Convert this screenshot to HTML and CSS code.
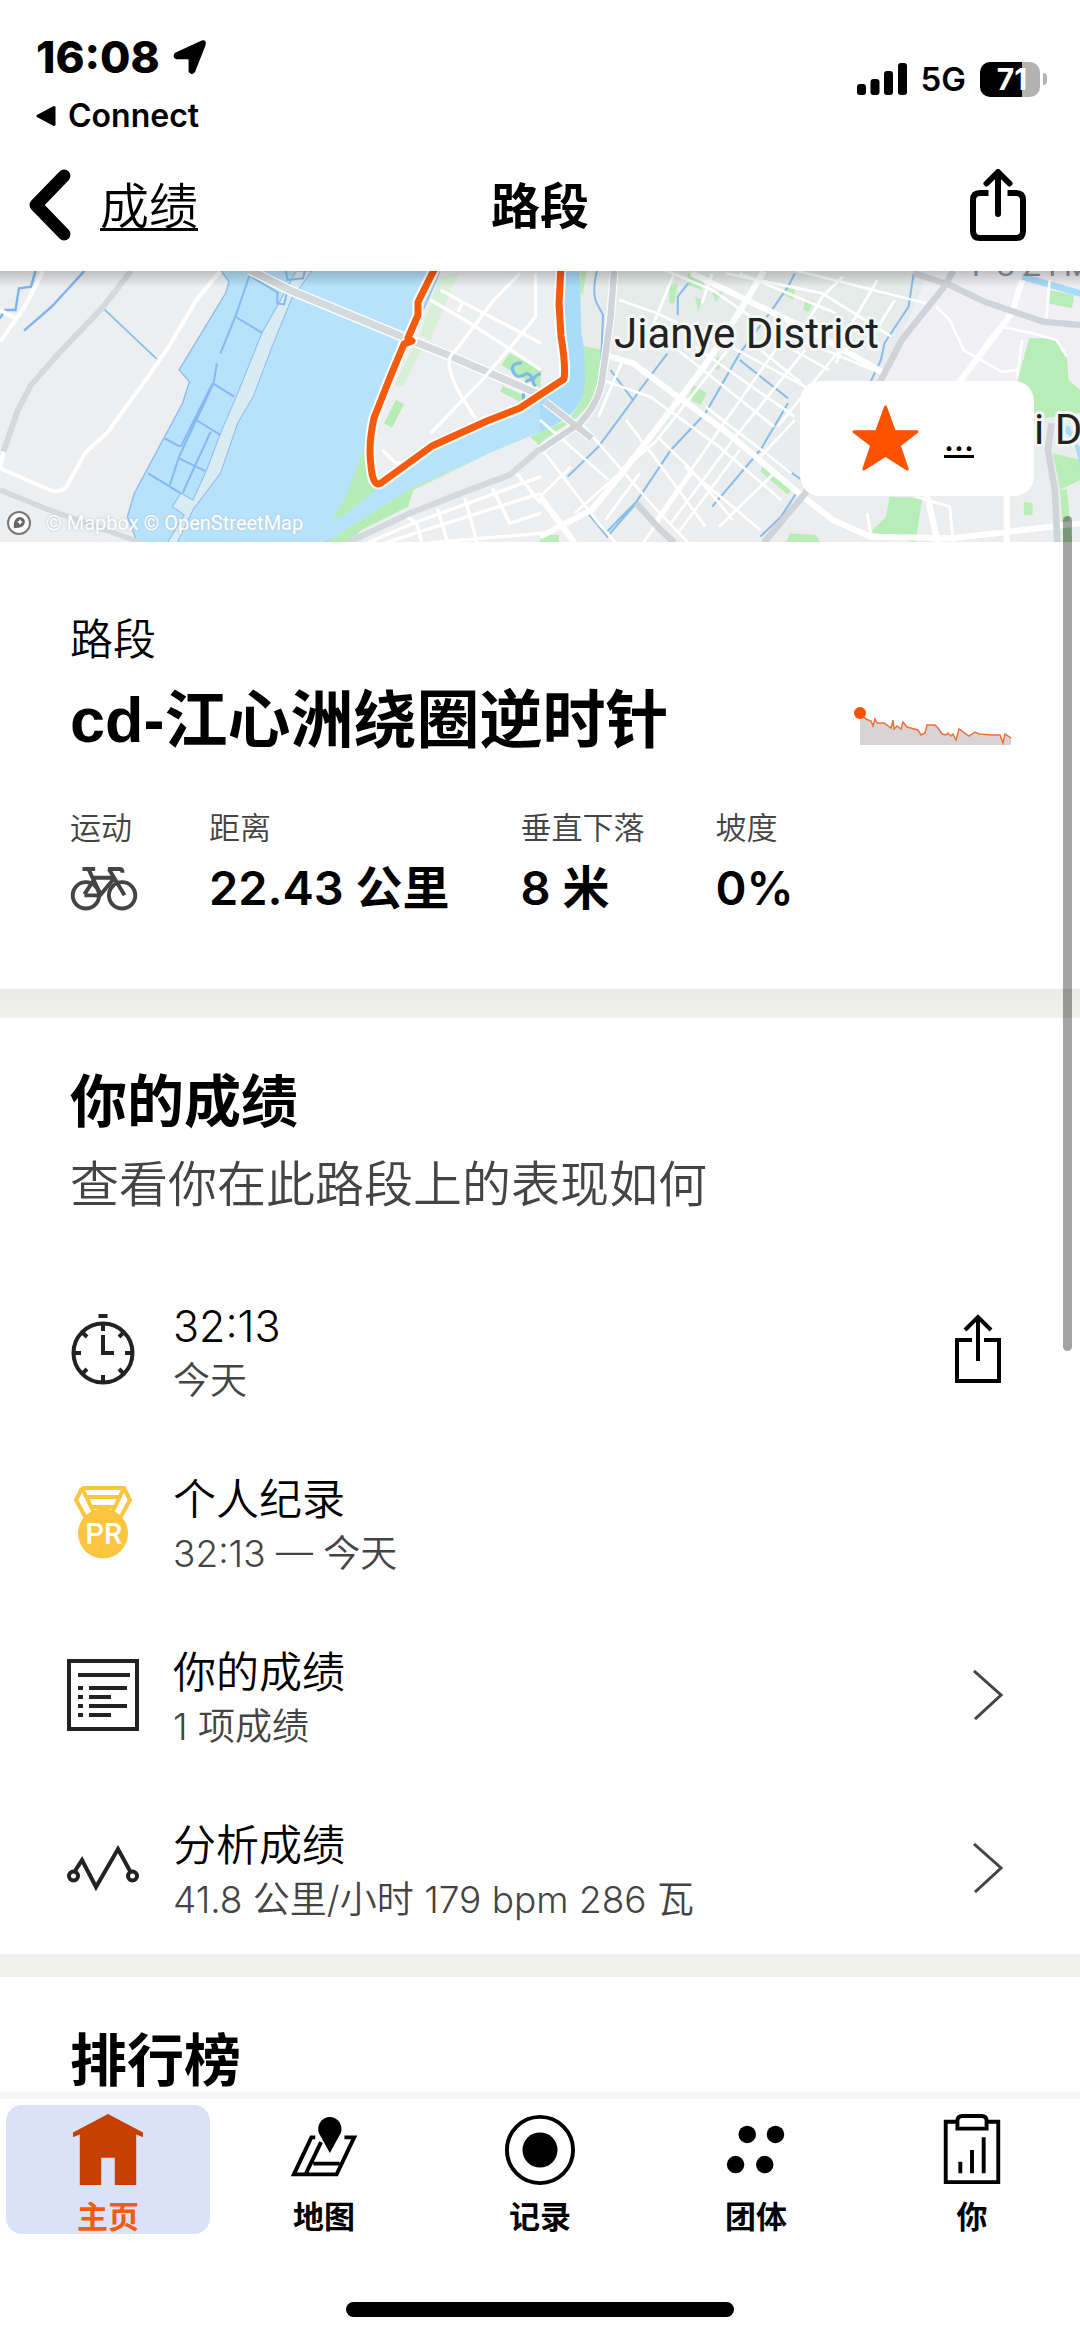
FILE: index.html
```html
<!DOCTYPE html>
<html lang="zh-CN">
<head>
<meta charset="utf-8">
<meta name="viewport" content="width=device-width, initial-scale=1">
<title>路段</title>
<link rel="stylesheet" href="styles.css">
</head>
<body>
<div class="app">
  <header class="top">
    <div class="status">
      <div class="status-left">
        <div class="clock">
          <span>16:08</span>
          <svg width="36" height="36" viewBox="0 0 36 38" aria-hidden="true"><path d="M3 16 31 3Q34 2 33 6L22 34Q20 37 18 34V22Q18 20 16 20H4Q1 19 3 16Z" stroke="#000" stroke-width="3" stroke-linejoin="round"/></svg>
        </div>
        <a class="return-app" href="#">
          <svg width="22" height="22" viewBox="0 0 22 22" aria-hidden="true"><path d="M2 11 18 2.500V19.500Z" stroke="#000" stroke-width="3" stroke-linejoin="round"/></svg>
          <span>Connect</span>
        </a>
      </div>
      <div class="status-right">
        <svg width="50" height="32" viewBox="0 0 50 32" aria-hidden="true"><rect y="21" width="9" height="11" rx="3"/><rect x="13.500" y="16" width="9" height="16" rx="3"/><rect x="27" y="8" width="9" height="24" rx="3"/><rect x="41" width="9" height="32" rx="3"/></svg>
        <span class="network">5G</span>
        <span class="battery"><span class="battery-body">71</span><span class="battery-tip"></span></span>
      </div>
    </div>
    <nav class="navbar">
      <a class="back" href="#">
        <svg width="44" height="72" viewBox="0 0 44 74" aria-hidden="true"><path d="M36.500 7 7.500 37 36.500 67" fill="none" stroke="#000" stroke-width="13" stroke-linecap="round" stroke-linejoin="round"/></svg>
        <span>成绩</span>
      </a>
      <h1 class="nav-title">路段</h1>
      <button class="icon-button nav-share" type="button" aria-label="分享">
        <svg width="56" height="72" viewBox="0 0 56 72" aria-hidden="true"><g fill="none" stroke="#000" stroke-width="6"><path d="M18.500 24H10Q3 24 3 31V62Q3 69 10 69H46Q53 69 53 62V31Q53 24 46 24H37.500"/><path d="M28 45V4M16.500 14.500 28 3 39.500 14.500" stroke-linecap="round" stroke-linejoin="round"/></g></svg>
      </button>
    </nav>
  </header>

  <main class="content">
    <section class="map" aria-label="地图">
      <svg class="map-art" viewBox="0 0 1080 271" preserveAspectRatio="xMidYMid slice" aria-hidden="true">
        <defs>
          <linearGradient id="fade" x1="0" y1="0" x2="0" y2="1"><stop offset="0" stop-color="#000" stop-opacity=".2"/><stop offset="1" stop-color="#000" stop-opacity="0"/></linearGradient>
          <linearGradient id="district" x1="0" y1="0" x2="0" y2="1"><stop offset="0" stop-color="#e5ebea"/><stop offset="1" stop-color="#ecedef"/></linearGradient>
        </defs>
        <rect width="1080" height="271" fill="#eceef0"/>
        <rect x="570" width="510" height="271" fill="url(#district)"/>
        <path d="M930 0H1080V150L1010 120 880 110Z" fill="#efeff4"/>
        <!-- west bank and river -->
        <g transform="translate(0 -11) scale(.3444 .3333)" fill="none">
          <path d="M640 30 665 65 655 100 520 330 550 365 530 430 390 700 370 770 400 850H940L1100 760 1190 690 1570 520V400L1400 480 1260 560 1090 680 1060 560 1085 480 1190 240 1280 30Z" fill="#b7e2fc" stroke="#8dbcf0" stroke-width="4"/>
          <path d="M1075 560 1055 570 1000 720 962 780 1000 765 1090 690 1300 550 1080 640Z" fill="#b6ecb5"/>
          <path d="M1085 500 1215 240 1280 30H1570V400L1400 480 1260 560 1095 670Z" fill="#eceef0"/>
          <path d="M945 848 1185 690 1430 575 1570 515V850H945Z" fill="#eceef0"/>
          <path d="M1275 50 1330 40 1285 150 1250 240 1220 225ZM1200 262 1222 270 1170 380 1145 375Z" fill="#d8f0d8"/>
          <path d="M1150 420 1173 433 1138 503 1115 490ZM1480 280 1570 330V385L1455 315ZM1460 378 1530 410 1510 425 1452 395ZM945 848 1185 690 1430 575 1200 690 1185 740 1050 810 1010 848ZM1540 530 1570 515V560Z" fill="#b6ecb5"/>
          <path d="M1515 308Q1480 310 1490 335T1530 340Q1560 355 1525 365M1570 340Q1535 355 1555 380M1520 400V420" stroke="#7db9ec" stroke-width="9"/>
          <path d="M905 33 845 120 790 260 735 410 690 490 640 640 560 750 515 848 485 850 535 765 500 740 525 700 560 720 600 630 640 520 690 400 760 220 820 110 860 33Z" fill="#d9ebf3" stroke="#8dbcf0" stroke-width="3"/>
          <path d="M725 45 685 165 640 280M630 310 620 370 570 480 520 590 493 675M680 168 760 218M618 370 680 410M570 480 640 525M478 535 523 560M520 595 595 633M430 640 525 700M612 515 565 620 530 700M617 370 525 560M730 50 810 100M805 100V130L825 133 835 90M830 33 835 60 880 55 885 33" stroke="#87b9f1" stroke-width="6"/>
          <path d="M103 33 90 80 55 85 45 150 15 150 0 175M245 33 150 140 70 212" stroke="#7db4f0" stroke-width="7"/>
          <path d="M300 145 455 297" stroke="#83bfdf" stroke-width="5"/>
          <path d="M125 33 80 125 45 180 0 245M0 150 45 175" stroke="#fff" stroke-width="12"/>
          <path d="M640 33 570 120 490 260 430 350 310 520 250 575 190 685Q165 700 145 690L0 625 10 575" stroke="#fff" stroke-width="12"/>
          <path d="M380 33 300 140 180 270 90 375 50 455 10 575" stroke="#d4d9dc" stroke-width="17"/>
          <path d="M0 690 130 745 280 800 410 848" stroke="#d4d9dc" stroke-width="16"/>
          <path d="M725 30 840 90 1180 235 1300 285 1570 405" stroke="#fff" stroke-width="30"/>
          <path d="M725 30 840 90 1180 235 1300 285 1570 405" stroke="#d4d9dc" stroke-width="22"/>
          <g stroke="#fff" stroke-width="10">
            <path d="M1280 90 1340 125 1480 200 1570 250M1250 120 1350 180 1470 260 1570 330M1510 40 1430 125 1320 275M1555 40V170L1500 240 1400 360 1250 520M1345 125 1330 155M1320 275Q1280 300 1340 410L1390 490M1400 165 1380 200M1110 570 1150 610 1180 605"/>
            <path d="M1070 848 1200 790 1570 650M1180 770 1210 790 1225 848M1270 745 1300 848M1350 715 1385 848M1430 685 1480 790 1570 760M1500 640 1570 730M1120 848 1570 700M1250 848 1570 820"/>
          </g>
          <path d="M1010 848 1190 760 1350 695 1480 645 1570 565" stroke="#d4d9dc" stroke-width="18"/>
        </g>
        <!-- east bank street grid -->
        <g transform="translate(540 -11) scale(.3444 .3333)" fill="none">
          <path d="M75 30 65 180 85 345 60 375 0 420V520L70 480Q135 430 140 330L120 220 115 30Z" fill="#a9dcf9"/>
          <path d="M118 30H135L125 100 115 100ZM128 258 180 270 165 410 105 475 60 505 0 550V515L80 480Q135 420 130 340ZM430 40 480 60 470 90 430 75ZM375 75 400 70 390 130 375 130ZM450 110 470 120 460 155ZM500 100 535 95 510 125ZM710 75 740 90 735 120 710 105ZM770 115 795 125 780 155 765 150ZM1420 235 1490 235 1530 290 1535 360 1568 390V460L1430 480 1385 370ZM1480 90 1550 105 1545 145 1475 130ZM445 375 485 400 465 435 430 415ZM515 290 530 295 520 330 505 325ZM645 620 730 690 720 705 640 635ZM1015 710 1110 715 1090 848 960 815 1005 770ZM1405 725 1430 730V765L1405 765ZM725 820 800 825 815 848H715ZM1490 580 1568 600V660L1510 690ZM0 825H55V848H0ZM1510 690 1530 690 1545 848 1520 848Z" fill="#b9edb8"/>
          <path d="M1500 490 1540 500 1568 620V560ZM1400 40 1568 90V110L1400 60Z" fill="#a9dcf9"/>
          <g stroke="#87bde8" stroke-width="6">
            <path d="M165 33Q150 100 165 130L183 165 178 300M740 40 720 80 680 140 580 280 480 460 380 570 280 725 190 820M430 70 400 110 400 165M370 280 290 390 270 420 205 330M580 300 720 415M640 570 720 430M640 570 760 660M500 740 640 570M270 420 170 560 80 650M1085 40 1070 140 1000 250 990 300 960 365M140 760 195 830 275 735M750 690 700 770 640 830"/>
          </g>
          <g stroke="#fff" stroke-width="8">
            <path d="M230 120 340 160 500 240M390 40 330 190M340 20 500 90 640 190 980 335M540 40 820 100 1020 230M580 40 860 160M700 20 1120 130M180 360 320 410 520 560 700 720M400 270 680 500M450 260 740 470M500 230 860 430M640 270 760 370M700 250 840 330M240 300 170 470M560 250 340 540 100 760M690 260 520 510 330 790M770 270 560 540 380 790M870 270 690 500M340 530 440 630 560 780M480 440 730 640M420 620 640 810M250 480 360 630 480 800M120 490 330 740 430 848M0 560 170 790 220 848M290 640 190 780M440 640 300 848M580 570 400 820M680 640 520 800M740 480 640 590M500 40 470 130M880 50 820 110 740 250M980 60 900 200 860 310M1030 120 970 220M0 480 200 660M0 710 90 620M950 760 960 820"/>
            <path d="M1150 140 1190 180 1230 270 1340 335 1390 330M1220 360 1310 230 1340 200 1430 220 1500 240 1530 290M1400 240 1385 350M1090 710 1190 740 1200 848M1480 60 1470 180"/>
          </g>
          <g stroke="#fff" stroke-width="18">
            <path d="M650 33 600 120 490 300 410 410 230 650 150 750 0 830M440 40 610 125 780 210 1000 340M190 285 270 310 400 410 540 515 740 690 850 780 960 830 1200 835 1568 790M1400 60 1370 160 1200 390M1120 690 1155 848M1355 690V848M0 710 80 820 100 848"/>
          </g>
          <path d="M215 33 205 170 180 360Q170 430 115 490L0 570M15 425 150 535" stroke="#fff" stroke-width="25"/>
          <path d="M215 33 205 170 180 360Q170 430 115 490L0 570M15 425 150 535M1200 33 1170 85 1050 240 985 370 770 700 650 848M280 730 350 810 390 848M1085 40 1190 75 1290 125 1460 185 1568 195M1485 490 1475 570 1495 690 1502 848" stroke="#d0d4d8" stroke-width="19"/>
        </g>
        <g fill="none" stroke-linejoin="round" stroke-linecap="round">
          <path d="M436 -5 418 31 418 44 408 67 412 70 404 73 391 104 374 147Q368 174 371 195 373 217 381 212L432 175 487 150 520 137 564 108Q566 96 561 65L559 33 561 -5" stroke="#fff" stroke-width="11"/>
          <path d="M436 -5 418 31 418 44 408 67 412 70 404 73 391 104 374 147Q368 174 371 195 373 217 381 212L432 175 487 150 520 137 564 108Q566 96 561 65L559 33 561 -5" stroke="#f65a0c" stroke-width="7"/>
        </g>
        <g class="map-label">
          <text x="614" y="77">Jianye District</text>
          <text x="1034" y="173">i D</text>
        </g>
        <text class="map-area" x="972" y="5">F U Z I M</text>
        <rect width="1080" height="16" fill="url(#fade)"/>
      </svg>
      <div class="attribution">
        <svg width="24" height="24" viewBox="0 0 24 24" aria-hidden="true"><circle cx="12" cy="12" r="11" fill="#fff" stroke="#777" stroke-width="2"/><path d="M7 17C6 10 9 6 13 6A5 5 0 0 1 17 14C14 17 10 17 7 17Z" fill="#666"/><path d="m13 8 1 2 2 1-2 1-1 2-1-2-2-1 2-1Z" fill="#fff"/></svg>
        <span>© Mapbox © OpenStreetMap</span>
      </div>
      <button class="star-card" type="button" aria-label="收藏">
        <svg width="67" height="67" viewBox="0 0 68 68" aria-hidden="true"><path d="M34 2 43 27H66L48 41 56 65 34 51 12 65 20 41 2 27H25Z" fill="#fc5200" stroke="#fc5200" stroke-width="3" stroke-linejoin="round"/></svg>
        <span>...</span>
      </button>
    </section>

    <section class="summary">
      <p class="kind">路段</p>
      <div class="title-row">
        <h2><span class="latin">cd-</span>江心洲绕圈逆时针</h2>
        <svg class="profile" width="158" height="56" viewBox="0 0 158 56" aria-hidden="true"><path d="M6 6 12 12 17 14 19 19 21 12 23 16 30 16 37 21 39 13 40 22 43 19 47 22 49 15 53 20 64 23 67 28 71 26 73 18H81L84 21 88 27 92 28 94 26 97 29 99 27 102 33 105 22 115 29 121 25 125 27 140 28 146 28 149 36 151 27 157 31V38H6Z" fill="#d6d4d5"/><path d="M6 6 12 12 17 14 19 19 21 12 23 16 30 16 37 21 39 13 40 22 43 19 47 22 49 15 53 20 64 23 67 28 71 26 73 18H81L84 21 88 27 92 28 94 26 97 29 99 27 102 33 105 22 115 29 121 25 125 27 140 28 146 28 149 36 151 27 157 31" fill="none" stroke="#f07038" stroke-width="1.500"/><circle cx="6" cy="6" r="6" fill="#fc5200"/></svg>
      </div>
      <dl class="stats">
        <div><dt>运动</dt><dd><svg width="68" height="45" viewBox="1 0 68 46" role="img" aria-label="骑行"><g fill="none" stroke="#444" stroke-width="4"><circle cx="16.500" cy="30" r="13.500"/><circle cx="53.500" cy="30" r="13.500"/><path d="M13 3H26M19 3 31 28M15 29 26 12H44M15 30H31L46 12M39 3H51Q54 3 54 7M40 3 56 30"/></g></svg></dd></div>
        <div><dt>距离</dt><dd>22.43 公里</dd></div>
        <div><dt>垂直下落</dt><dd>8 米</dd></div>
        <div><dt>坡度</dt><dd>0%</dd></div>
      </dl>
    </section>

    <section class="efforts">
      <h2>你的成绩</h2>
      <p class="lead">查看你在此路段上的表现如何</p>
      <ul class="rows">
        <li class="row">
          <svg width="72" height="72" viewBox="0 0 72 72" aria-hidden="true"><g fill="none" stroke="#222" stroke-width="4"><circle cx="36" cy="40" r="29.500"/><path d="M31.500 3H40.500M36 11V18M36 62V69M7 40H14M58 40H65M15.500 19.500 20 24M56.500 19.500 52 24M15.500 60.500 20 56M56.500 60.500 52 56"/><path d="M36 22V40H47"/></g></svg>
          <div class="row-text"><p>32:13</p><p class="sub">今天</p></div>
          <button class="icon-button" type="button" aria-label="分享成绩">
            <svg width="48" height="70" viewBox="0 0 48 70" aria-hidden="true"><g fill="none" stroke="#000" stroke-width="4"><path d="M17 26H2V67H44V26H29M23 47V4M10 16 23 3 36 16"/></g></svg>
          </button>
        </li>
        <li class="row">
          <svg width="72" height="74" viewBox="0 0 72 74" aria-hidden="true"><g fill="none" stroke="#fcc540" stroke-width="4"><path d="M15 3H57L63 15 52 35M15 3 9 15 20 35M15 3 28 30M57 3 44 30M19 12H53M23 22H49"/></g><circle cx="36" cy="48.500" r="25" fill="#fcc540"/><text class="pr-text" x="37" y="59" text-anchor="middle">PR</text></svg>
          <div class="row-text"><p>个人纪录</p><p class="sub">32:13 — 今天</p></div>
        </li>
        <li class="row">
          <svg width="72" height="72" viewBox="0 0 72 72" aria-hidden="true"><g fill="none" stroke="#222" stroke-width="4"><path d="M2 2H70V70H2ZM11 16H63M11 29H16M22 29H60M11 38H16M22 38H44M11 47H16M22 47H60M11 56H16M22 56H44"/></g></svg>
          <div class="row-text"><p>你的成绩</p><p class="sub">1 项成绩</p></div>
          <a class="go" href="#" aria-label="你的成绩"><svg width="32" height="50" viewBox="0 0 32 50" aria-hidden="true"><path d="M3 1 30 25 4 49" fill="none" stroke="#444" stroke-width="3"/></svg></a>
        </li>
        <li class="row">
          <svg width="72" height="48" viewBox="0 0 72 48" aria-hidden="true"><g fill="none" stroke="#222" stroke-width="4"><circle cx="6.500" cy="32" r="4.500"/><circle cx="65.500" cy="32" r="4.500"/><path d="M8 27 15 16 29 43 51 5 63 27"/></g></svg>
          <div class="row-text"><p>分析成绩</p><p class="sub">41.8 公里/小时 179 bpm 286 瓦</p></div>
          <a class="go" href="#" aria-label="分析成绩"><svg width="32" height="50" viewBox="0 0 32 50" aria-hidden="true"><path d="M3 1 30 25 4 49" fill="none" stroke="#444" stroke-width="3"/></svg></a>
        </li>
      </ul>
    </section>

    <section class="board"><h2>排行榜</h2></section>
  </main>

  <footer class="tabbar">
    <nav class="tabs">
      <a class="tab active" href="#" aria-current="page">
        <svg width="72" height="72" viewBox="0 0 74 74" aria-hidden="true"><path d="M37 0 73 19V24L66 21V73H44V45H30V73H8V21L1 24V19Z" fill="#c64000"/></svg>
        <span>主页</span>
      </a>
      <a class="tab" href="#">
        <svg width="72" height="72" viewBox="0 0 74 74" aria-hidden="true"><g fill="none" stroke="#000" stroke-width="4"><path d="M28 24H24L6 62H50L68 24H58M34 29 18 62M26 51H53"/></g><path d="M43 40 32 20A12 12 0 1 1 54 20Z" stroke="#fff" stroke-width="3" paint-order="stroke"/></svg>
        <span>地图</span>
      </a>
      <a class="tab" href="#">
        <svg width="72" height="72" viewBox="0 0 74 74" aria-hidden="true"><circle cx="37" cy="37" r="34" fill="none" stroke="#000" stroke-width="4"/><circle cx="37" cy="37" r="18"/></svg>
        <span>记录</span>
      </a>
      <a class="tab" href="#">
        <svg width="72" height="72" viewBox="0 0 74 74" aria-hidden="true"><circle cx="28" cy="21" r="9"/><circle cx="57" cy="21" r="9"/><circle cx="16" cy="52" r="9"/><circle cx="46" cy="52" r="9"/></svg>
        <span>团体</span>
      </a>
      <a class="tab" href="#">
        <svg width="72" height="72" viewBox="0 0 74 74" aria-hidden="true"><g fill="none" stroke="#000" stroke-width="4"><path d="M22 8H10V70H64V8H52"/><path d="M22 15V7Q22 2 27 2H47Q52 2 52 7V15Z"/><path d="M25 49V61M37 37V61M49 24V61"/></g></svg>
        <span>你</span>
      </a>
    </nav>
    <div class="home-indicator"></div>
  </footer>
  <div class="scroll-thumb"></div>
</div>
</body>
</html>
```
FILE: styles.css
```css
* { box-sizing: border-box; }

body {
  margin: 0;
  background: #fff;
  color: #000;
  font-family: Inter, "Noto Sans CJK SC", sans-serif;
  font-weight: 400;
}

h1, h2, p, ul, dl, dd { margin: 0; padding: 0; }
ul { list-style: none; }
a { color: inherit; text-decoration: none; }
svg { display: block; flex: none; }
button { border: 0; padding: 0; font: inherit; color: inherit; background: none; }

.app {
  position: relative;
  display: flex;
  flex-direction: column;
  min-height: 100vh;
}

/* Status bar */
.status {
  display: flex;
  justify-content: space-between;
  align-items: flex-start;
  padding: 30px 33px 0 36px;
}
.clock {
  display: flex;
  align-items: center;
  gap: 12px;
  font-size: 44px;
  line-height: 54px;
  font-weight: 800;
}
.return-app {
  display: flex;
  align-items: center;
  gap: 10px;
  margin-top: 10px;
  font-size: 32px;
  line-height: 44px;
  font-weight: 600;
}
.status-right {
  display: flex;
  align-items: center;
  gap: 14px;
  margin-top: 26px;
  line-height: 46px;
}
.network { font-size: 33px; font-weight: 600; }
.battery { display: flex; align-items: center; gap: 3px; }
.battery-body {
  width: 60px;
  padding-left: 4px;
  border-radius: 10px;
  background: linear-gradient(90deg, #000 70%, #b3b3b3 70%);
  color: #fff;
  font-size: 30px;
  line-height: 35px;
  font-weight: 700;
  text-align: center;
}
.battery-tip {
  width: 4px;
  height: 12px;
  border-radius: 0 6px 6px 0;
  background: #b3b3b3;
}

/* Navigation bar */
.navbar {
  display: grid;
  grid-template-columns: 1fr auto 1fr;
  align-items: center;
  height: 133px;
  padding: 0 54px;
}
.back {
  display: flex;
  align-items: center;
  gap: 28px;
  margin-left: -26px;
  font-size: 49px;
  line-height: 60px;
  font-weight: 350;
  text-decoration: underline;
  text-decoration-thickness: 3px;
  text-underline-offset: 4px;
}
.nav-title {
  font-size: 49px;
  line-height: 60px;
  font-weight: 600;
}
.back span, .nav-title { padding-top: 5px; }
.nav-share { justify-self: end; }

/* Map */
.map { position: relative; height: 271px; overflow: hidden; }
.map-art { width: 100%; height: 100%; }
.map-label {
  font-family: Roboto, sans-serif;
  font-size: 42px;
  fill: #222;
  stroke: #f4f6f6;
  stroke-width: 6px;
  stroke-linejoin: round;
  paint-order: stroke;
}
.map-area {
  font-family: Roboto, sans-serif;
  font-size: 30px;
  fill: #8b8f94;
}
.attribution {
  position: absolute;
  left: 7px;
  bottom: 6px;
  display: flex;
  align-items: center;
  gap: 15px;
  font-family: Roboto, sans-serif;
  font-size: 20px;
  line-height: 26px;
  color: #fff;
  text-shadow: 0 0 3px #b5c0c8;
}
.star-card {
  position: absolute;
  right: 46px;
  bottom: 46px;
  display: flex;
  align-items: center;
  gap: 25px;
  padding: 24px 60px 24px 52px;
  border-radius: 20px;
  background: #fff;
  font-size: 33px;
  line-height: 48px;
  font-weight: 500;
  text-decoration: underline;
  text-decoration-thickness: 3px;
  text-underline-offset: 4px;
}

/* Segment summary */
.summary { padding: 70px 68px 62px 70px; }
.kind { font-size: 43px; line-height: 54px; font-weight: 350; }
.title-row {
  display: flex;
  align-items: center;
  justify-content: space-between;
  margin-top: 10px;
}
h2 { font-weight: 600; }
.title-row h2 { font-size: 63px; line-height: 86px; }
.title-row .latin { font-family: "Liberation Sans", sans-serif; font-weight: 700; }
.profile { align-self: flex-end; }
.stats { display: flex; gap: 71px; margin-top: 44px; }
.stats dt {
  font-size: 31px;
  line-height: 42px;
  font-weight: 350;
  color: #444;
}
.stats dd {
  display: flex;
  align-items: center;
  height: 78px;
  font-size: 47px;
  line-height: 60px;
  font-weight: 600;
}

/* Your efforts */
.efforts::before {
  content: "";
  display: block;
  height: 29px;
  background: linear-gradient(#eaeae8, #f0f0ee);
}
.efforts h2, .board h2 {
  padding: 53px 70px 0;
  font-size: 57px;
  line-height: 62px;
}
.lead {
  padding: 19px 70px 0;
  font-size: 49px;
  line-height: 66px;
  font-weight: 350;
  color: #444;
}
.rows { padding-top: 44px; }
.row {
  display: flex;
  align-items: center;
  gap: 34px;
  height: 173px;
  padding: 0 77px 0 67px;
}
.row-text {
  flex: 1;
  font-size: 43px;
  line-height: 64px;
  font-weight: 350;
}
.row-text .sub {
  font-size: 37px;
  line-height: 46px;
  color: #444;
}
.pr-text { font-family: Roboto, sans-serif; font-size: 29px; font-weight: 500; fill: #fff; }

.board { border-top: 23px solid #f0f0ee; }

/* Tab bar */
.tabbar {
  margin-top: auto;
  padding-bottom: 23px;
  border-top: 7px solid #f6f6f5;
  background: #fff;
}
.tabs { display: grid; grid-template-columns: repeat(5, 1fr); padding-top: 6px; }
.tab {
  display: flex;
  flex-direction: column;
  align-items: center;
  margin: 0 6px;
  padding-top: 9px;
  border-radius: 16px;
  font-size: 31px;
  line-height: 34px;
  font-weight: 600;
}
.tab span { margin-top: 14px; }
.tab.active { background: #d9e2f8; color: #f65a0c; }
.home-indicator {
  width: 36%;
  height: 15px;
  margin: 68px auto 0;
  border-radius: 8px;
  background: #000;
}

.scroll-thumb {
  position: absolute;
  top: 516px;
  right: 8px;
  width: 9px;
  height: 835px;
  border-radius: 5px;
  background: rgba(0, 0, 0, .36);
}
```
